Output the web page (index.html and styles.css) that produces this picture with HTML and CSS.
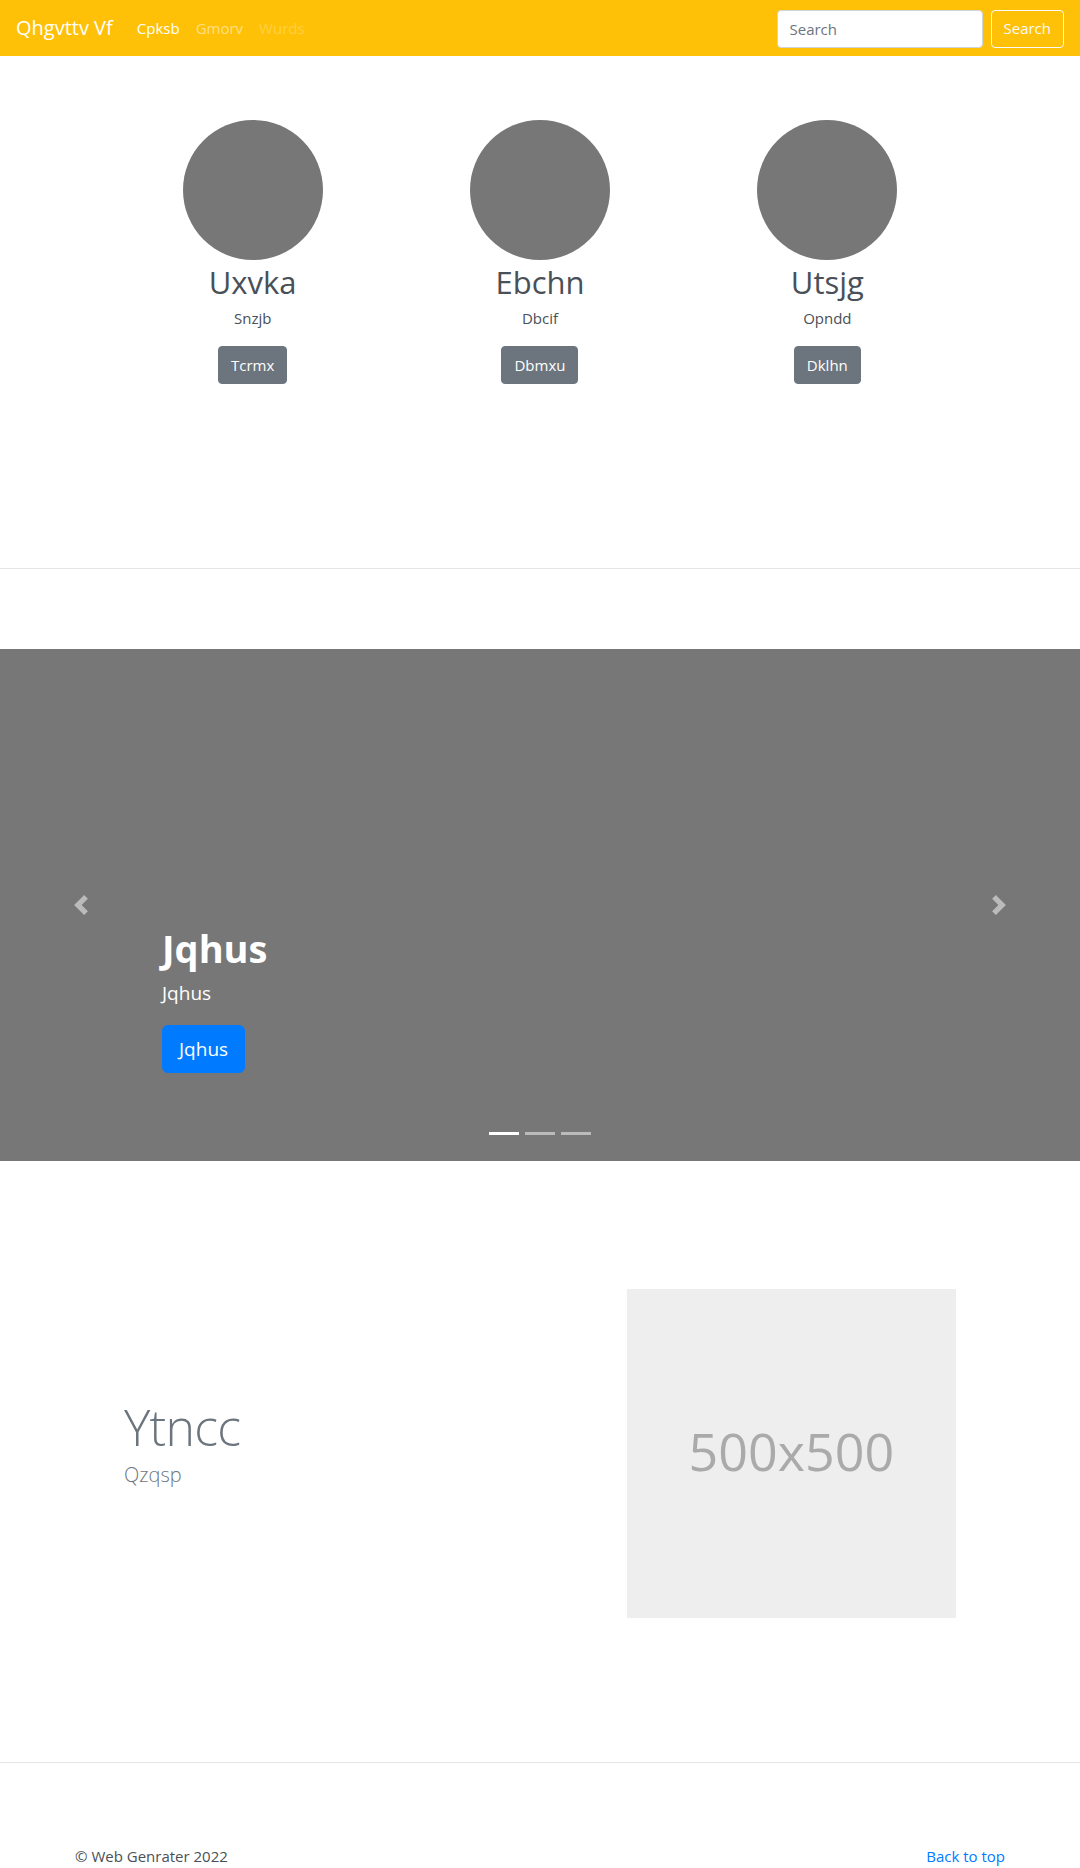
FILE: index.html
```html
<!DOCTYPE html>
<html lang="en">
<head>
<meta charset="utf-8">
<title>Qhgvttv Vf</title>
<link rel="stylesheet" href="styles.css">
</head>
<body>
<header class="navbar">
  <a class="brand" href="#">Qhgvttv Vf</a>
  <ul class="nav">
    <li><a class="nav-link active" href="#">Cpksb</a></li>
    <li><a class="nav-link" href="#">Gmorv</a></li>
    <li><a class="nav-link disabled" href="#">Wurds</a></li>
  </ul>
  <form class="search">
    <input class="search-input" type="text" placeholder="Search">
    <button class="btn-outline" type="button">Search</button>
  </form>
</header>

<main>
  <section class="marketing">
    <div class="row three">
      <div class="col">
        <div class="avatar"></div>
        <h2 class="person">Uxvka</h2>
        <p class="role">Snzjb</p>
        <p class="action"><a class="btn btn-secondary" href="#">Tcrmx</a></p>
      </div>
      <div class="col">
        <div class="avatar"></div>
        <h2 class="person">Ebchn</h2>
        <p class="role">Dbcif</p>
        <p class="action"><a class="btn btn-secondary" href="#">Dbmxu</a></p>
      </div>
      <div class="col">
        <div class="avatar"></div>
        <h2 class="person">Utsjg</h2>
        <p class="role">Opndd</p>
        <p class="action"><a class="btn btn-secondary" href="#">Dklhn</a></p>
      </div>
    </div>
  </section>

  <hr class="divider">

  <section class="carousel">
    <ol class="indicators">
      <li class="active"></li>
      <li></li>
      <li></li>
    </ol>
    <a class="control prev" href="#">
      <svg width="20" height="20" viewBox="0 0 8 8"><path fill="#fff" d="M5.25 0l-4 4 4 4 1.5-1.5L4.25 4l2.5-2.5L5.25 0z"/></svg>
    </a>
    <a class="control next" href="#">
      <svg width="20" height="20" viewBox="0 0 8 8"><path fill="#fff" d="M2.75 0l-1.5 1.5L3.75 4l-2.5 2.5L2.75 8l4-4-4-4z"/></svg>
    </a>
    <div class="caption">
      <h1 class="cap-title">Jqhus</h1>
      <p class="cap-text">Jqhus</p>
      <p class="cap-action"><a class="btn btn-lg btn-primary" href="#">Jqhus</a></p>
    </div>
  </section>

  <section class="featurette">
    <div class="row feat-row">
      <div class="feat-text">
        <h2 class="feat-heading">Ytncc</h2>
        <p class="lead">Qzqsp</p>
      </div>
      <div class="feat-media">
        <div class="placeholder">500x500</div>
      </div>
    </div>
  </section>

  <hr class="divider bottom">

  <footer class="footer">
    <p class="copy">© Web Genrater 2022</p>
    <p class="back"><a href="#">Back to top</a></p>
  </footer>
</main>
</body>
</html>
```

FILE: styles.css
```css
* { box-sizing: border-box; }

html, body {
  margin: 0;
  padding: 0;
  background: #fff;
}

body {
  font-family: "Segoe UI", "Open Sans", sans-serif;
  font-size: 16px;
  line-height: 1.5;
  color: #495057;
}

a { text-decoration: none; }

/* Navbar */
.navbar {
  height: 56px;
  background: #ffc107;
  display: flex;
  align-items: center;
  padding: 0 16px;
}

.brand {
  color: #fff;
  font-size: 20px;
  line-height: 30px;
  margin-right: 16px;
}

.nav {
  list-style: none;
  margin: 0;
  padding: 0;
  display: flex;
  flex: 1;
}

.nav-link {
  display: block;
  padding: 8px;
  font-size: 15px;
  line-height: 24px;
  color: rgba(255, 255, 255, 0.5);
}

.nav-link.active { color: #fff; }
.nav-link.disabled { color: rgba(255, 255, 255, 0.25); }

.search {
  display: flex;
  align-items: center;
  margin-top: 1px;
}

.search-input {
  width: 206px;
  height: 38px;
  padding: 6px 12px;
  font: inherit;
  font-size: 15px;
  color: #495057;
  border: 1px solid #ced4da;
  border-radius: 4px;
  margin-right: 8px;
  background: #fff;
}

.search-input::placeholder { color: #6c757d; }

.btn-outline {
  height: 38px;
  padding: 6px 12px;
  font: inherit;
  font-size: 15px;
  color: #f8f9fa;
  background: transparent;
  border: 1px solid #f8f9fa;
  border-radius: 4px;
}

/* Generic buttons */
.btn {
  display: inline-block;
  padding: 6px 12px;
  font-size: 15px;
  line-height: 24px;
  border: 1px solid transparent;
  border-radius: 4px;
  color: #fff;
}

.btn-secondary {
  background: #6c757d;
  border-color: #6c757d;
}

.btn-primary {
  background: #007bff;
  border-color: #007bff;
}

.btn-lg {
  padding: 8px 16px;
  font-size: 19px;
  line-height: 30px;
  border-radius: 6px;
}

/* Marketing */
.row {
  width: 862px;
  margin: 0 auto;
}

.marketing {
  padding-top: 64px;
  height: 512px;
}

.three {
  display: grid;
  grid-template-columns: repeat(3, 1fr);
}

.col {
  padding: 0 15px;
  text-align: center;
}

.avatar {
  width: 140px;
  height: 140px;
  border-radius: 50%;
  background: #777;
  margin: 0 auto;
}

.person {
  margin: 0;
  font-size: 31px;
  font-weight: 400;
  line-height: 42px;
  margin-top: 1px;
}

.role {
  margin: 4px 0 16px;
  font-size: 15px;
}

.action { margin: 0; }

/* Dividers */
.divider {
  border: 0;
  border-top: 1px solid rgba(0, 0, 0, 0.1);
  margin: 0;
}

/* Carousel */
.carousel {
  position: relative;
  height: 512px;
  margin-top: 80px;
  background: #777;
}

.indicators {
  position: absolute;
  left: 0;
  right: 0;
  bottom: 0;
  margin: 0 0 16px;
  padding: 0;
  list-style: none;
  display: flex;
  justify-content: center;
}

.indicators li {
  width: 30px;
  height: 23px;
  margin: 0 3px;
  border-top: 10px solid transparent;
  border-bottom: 10px solid transparent;
  background: #fff;
  background-clip: padding-box;
  opacity: 0.5;
}

.indicators li.active { opacity: 1; }

.control {
  position: absolute;
  top: 0;
  bottom: 0;
  width: 15%;
  display: flex;
  align-items: center;
  justify-content: center;
  opacity: 0.5;
}

.control.prev { left: 0; }
.control.next { right: 0; }

.caption {
  position: absolute;
  left: 15%;
  right: 15%;
  bottom: 88px;
  color: #fff;
}

.cap-title {
  margin: 0 0 6px;
  font-size: 38px;
  font-weight: 700;
  line-height: 48px;
}

.cap-text {
  margin: 0 0 17px;
  font-size: 19px;
  line-height: 30px;
}

.cap-action { margin: 0; }

/* Featurette */
.featurette {
  padding-top: 128px;
  padding-bottom: 144px;
}

.feat-row {
  display: grid;
  grid-template-columns: 7fr 5fr;
  align-items: center;
}

.feat-text {
  padding: 0 15px;
  margin-top: -16px;
}

.feat-media { padding: 0 15px; }

.feat-heading {
  margin: 0 0 8px;
  font-size: 50px;
  font-weight: 300;
  line-height: 1;
  letter-spacing: -0.8px;
  color: #6c757d;
}

.lead {
  margin: 0;
  font-size: 20px;
  font-weight: 300;
  line-height: 30px;
  color: #6c757d;
}

.placeholder {
  width: 100%;
  aspect-ratio: 1 / 1;
  background: #eee;
  color: #aaa;
  font-size: 52px;
  padding-bottom: 6px;
  display: flex;
  align-items: center;
  justify-content: center;
}

/* Footer */
.footer {
  width: 930px;
  margin: 0 auto;
  padding-top: 82px;
  display: flex;
  justify-content: space-between;
  font-size: 15px;
}

.footer p { margin: 0; }

.back a { color: #007bff; }
```
